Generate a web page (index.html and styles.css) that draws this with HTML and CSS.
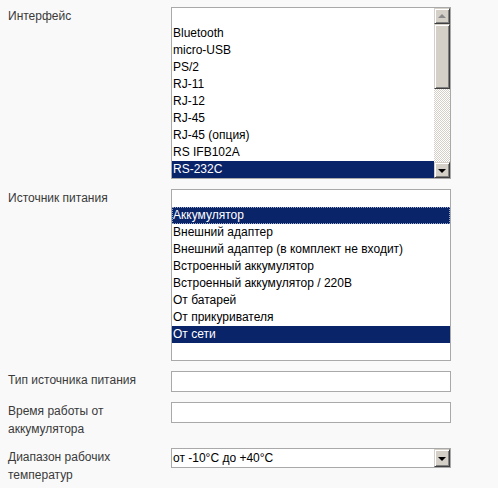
FILE: index.html
```html
<!DOCTYPE html>
<html lang="ru">
<head>
<meta charset="utf-8">
<title>Форма</title>
<link rel="stylesheet" href="styles.css">
</head>
<body>
<div class="form">
  <div class="row">
    <div class="label">Интерфейс</div>
    <div class="listbox">
      <div class="options">
        <div class="opt"></div>
        <div class="opt">Bluetooth</div>
        <div class="opt">micro-USB</div>
        <div class="opt">PS/2</div>
        <div class="opt">RJ-11</div>
        <div class="opt">RJ-12</div>
        <div class="opt">RJ-45</div>
        <div class="opt">RJ-45 (опция)</div>
        <div class="opt">RS IFB102A</div>
        <div class="opt sel">RS-232C</div>
      </div>
      <div class="scrollbar">
        <div class="sb-btn"><span class="arrow-up"></span></div>
        <div class="sb-thumb"></div>
        <div class="sb-track"></div>
        <div class="sb-btn"><span class="arrow-down"></span></div>
      </div>
    </div>
  </div>
  <div class="row">
    <div class="label">Источник питания</div>
    <div class="listbox">
      <div class="options">
        <div class="opt"></div>
        <div class="opt sel focus">Аккумулятор</div>
        <div class="opt">Внешний адаптер</div>
        <div class="opt">Внешний адаптер (в комплект не входит)</div>
        <div class="opt">Встроенный аккумулятор</div>
        <div class="opt">Встроенный аккумулятор / 220В</div>
        <div class="opt">От батарей</div>
        <div class="opt">От прикуривателя</div>
        <div class="opt sel">От сети</div>
        <div class="opt"></div>
      </div>
    </div>
  </div>
  <div class="row">
    <div class="label">Тип источника питания</div>
    <div class="textbox"></div>
  </div>
  <div class="row">
    <div class="label">Время работы от аккумулятора</div>
    <div class="textbox"></div>
  </div>
  <div class="row">
    <div class="label">Диапазон рабочих температур</div>
    <div class="dropdown">
      <span class="dd-value">от -10°C до +40°C</span>
      <span class="dd-btn"><span class="arrow-down"></span></span>
    </div>
  </div>
</div>
</body>
</html>
```
FILE: styles.css
```css
html, body {
  margin: 0;
  padding: 0;
  background: #f9f9f9;
}
body {
  font-family: "Liberation Sans", Arial, sans-serif;
  font-size: 12px;
}
.form {
  display: flex;
  flex-direction: column;
  gap: 10px;
  padding: 7px 0 0 8px;
}
.row {
  display: grid;
  grid-template-columns: 163px 280px;
  align-items: start;
}
.label {
  color: #3a3a3a;
  line-height: 18px;
  padding-right: 13px;
}
.listbox {
  display: flex;
  height: 170px;
  border: 1px solid #a9a9a9;
  background: #fff;
  overflow: hidden;
}
.options {
  flex: 1;
  display: flex;
  flex-direction: column;
}
.opt {
  height: 17px;
  line-height: 17px;
  padding-left: 1px;
  color: #000;
  white-space: nowrap;
}
.opt.sel {
  background: #0a246a;
  color: #fff;
}
.opt.focus {
  outline: 1px dotted #9aa6c8;
  outline-offset: -1px;
}
.scrollbar {
  width: 16px;
  display: flex;
  flex-direction: column;
}
.sb-btn,
.sb-thumb,
.dd-btn {
  box-sizing: border-box;
  background: #d4d0c8;
  border: 1px solid;
  border-color: #d4d0c8 #404040 #404040 #d4d0c8;
  box-shadow: inset 1px 1px #fff, inset -1px -1px #808080;
}
.sb-btn {
  height: 16px;
  display: flex;
  align-items: center;
  justify-content: center;
}
.sb-thumb {
  height: 65px;
}
.sb-track {
  flex: 1;
  background: repeating-conic-gradient(#d4d0c8 0 25%, #fff 0 50%) 0 0 / 2px 2px;
}
.arrow-up {
  width: 0;
  height: 0;
  border-left: 4px solid transparent;
  border-right: 4px solid transparent;
  border-bottom: 4px solid #8a8a8a;
}
.arrow-down {
  width: 0;
  height: 0;
  border-left: 4px solid transparent;
  border-right: 4px solid transparent;
  border-top: 4px solid #000;
  margin-top: 1px;
}
.textbox {
  height: 19px;
  border: 1px solid #a9a9a9;
  background: #fff;
}
.dropdown {
  height: 18px;
  border: 1px solid #a9a9a9;
  background: #fff;
  display: flex;
  align-items: center;
  justify-content: space-between;
}
.dd-value {
  padding-left: 1px;
  color: #000;
}
.dd-btn {
  width: 16px;
  height: 18px;
  display: flex;
  align-items: center;
  justify-content: center;
}
```
